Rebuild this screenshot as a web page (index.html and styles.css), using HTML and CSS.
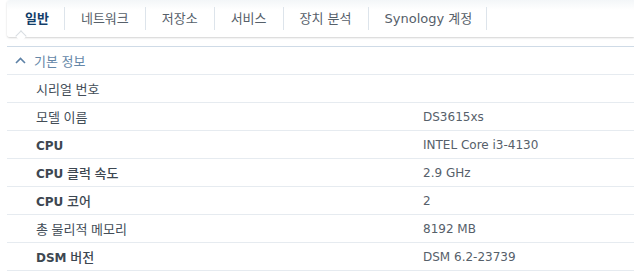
FILE: index.html
```html
<!DOCTYPE html>
<html lang="ko">
<head>
    <meta charset="UTF-8">
    <title>정보 센터</title>
    <link rel="stylesheet" href="styles.css">
</head>
<body>
    <!-- Tabs -->
    <div class="tabs">
        <div class="tab active">일반</div>
        <div class="tab">네트워크</div>
        <div class="tab">저장소</div>
        <div class="tab">서비스</div>
        <div class="tab">장치 분석</div>
        <div class="tab last">Synology 계정</div>
    </div>

    <div class="panel">
        <div class="section-head">
            <svg class="chevron" width="11" height="7" viewBox="0 0 11 7">
                <path d="M1 6 L5.5 1.5 L10 6" fill="none" stroke="#5d81a6" stroke-width="1.6"/>
            </svg>
            <span>기본 정보</span>
        </div>
        <div class="row"><div class="label">시리얼 번호</div><div class="value"></div></div>
        <div class="row"><div class="label">모델 이름</div><div class="value">DS3615xs</div></div>
        <div class="row"><div class="label bold"><span class="en">CPU</span></div><div class="value">INTEL Core i3-4130</div></div>
        <div class="row"><div class="label bold"><span class="en">CPU</span> 클럭 속도</div><div class="value">2.9 GHz</div></div>
        <div class="row"><div class="label bold"><span class="en">CPU</span> 코어</div><div class="value">2</div></div>
        <div class="row"><div class="label">총 물리적 메모리</div><div class="value">8192 MB</div></div>
        <div class="row"><div class="label bold"><span class="en">DSM</span> 버전</div><div class="value">DSM 6.2-23739</div></div>
    </div>
</body>
</html>
```

FILE: styles.css
```css
body {
    margin: 0;
    background: #fff;
    font-family: 'DejaVu Sans', 'Noto Sans CJK KR', sans-serif;
    font-size: 12px;
    color: #414b55;
    overflow: hidden;
}

/* Tabs */
.tabs {
    margin-left: 7px;
    height: 37px;
    display: flex;
    align-items: center;
    background: linear-gradient(#f3f6f8, #fff 10px);
    border-radius: 3px 0 0 3px;
    box-shadow: 0 1px 2px rgba(0, 0, 0, 0.18);
    position: relative;
}

.tab {
    height: 23px;
    line-height: 23px;
    padding: 0 16px;
    border-right: 1px solid #dde4eb;
    color: #56606a;
    font-size: 13px;
    font-family: 'DejaVu Sans', 'Noto Sans CJK KR', sans-serif;
}

.tab.last {
    padding-right: 14px;
}

.tab.active {
    color: #123e6a;
    font-weight: 600;
    position: relative;
    padding: 0 15px 0 18px;
}

.tab.active::after {
    content: '';
    position: absolute;
    left: 10px;
    bottom: -10px;
    width: 7px;
    height: 7px;
    background: #fff;
    border-top: 1px solid #d8dde2;
    border-left: 1px solid #d8dde2;
    transform: rotate(45deg);
}

/* Info panel */
.panel {
    margin: 9px 0 0 7px;
}

.section-head {
    height: 27px;
    display: flex;
    align-items: center;
    border-top: 1px solid #cfdbe7;
    border-bottom: 1px solid #e6ebf0;
    color: #6587a8;
    font-size: 13px;
    font-family: 'Noto Sans CJK KR', sans-serif;
}

.chevron {
    margin: 0 8px 0 8px;
}

.row {
    height: 27px;
    display: grid;
    grid-template-columns: 416px 1fr;
    align-items: center;
    border-bottom: 1px solid #e6ebf0;
}

.label {
    padding-left: 29px;
    font-size: 13px;
    font-family: 'Noto Sans CJK KR', sans-serif;
    color: #434d57;
}

.label.bold {
    font-weight: 500;
    color: #3d4751;
}

.label .en {
    font-family: 'DejaVu Sans', sans-serif;
    font-size: 12px;
    font-weight: bold;
}

.value {
    color: #56606a;
}
```
